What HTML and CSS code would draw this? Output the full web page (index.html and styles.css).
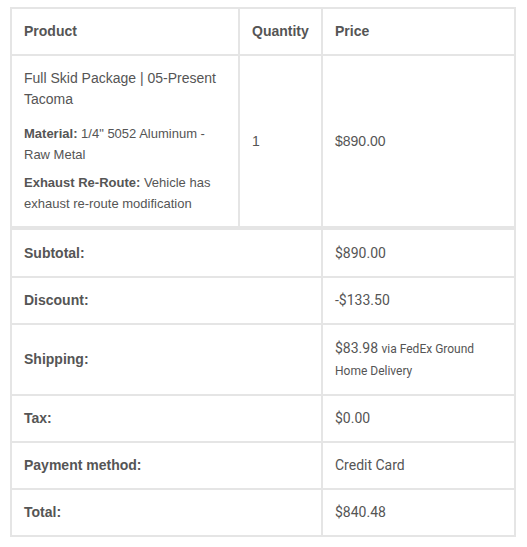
FILE: index.html
```html
<!DOCTYPE html>
<html lang="en">
<head>
    <meta charset="UTF-8">
    <meta name="viewport" content="width=device-width, initial-scale=1.0">
    <title>Order details</title>
    <link rel="stylesheet" href="styles.css">
</head>
<body>

    <div class="order-wrap">
        <table class="order-table">
            <colgroup>
                <col class="col-product">
                <col class="col-qty">
                <col class="col-price">
            </colgroup>
            <thead>
                <tr>
                    <th>Product</th>
                    <th>Quantity</th>
                    <th>Price</th>
                </tr>
            </thead>
            <tbody>
                <tr>
                    <td>
                        <div class="item-name">Full Skid Package | 05-Present Tacoma</div>
                        <ul class="item-meta">
                            <li><strong>Material:</strong> 1/4" 5052 Aluminum - Raw Metal</li>
                            <li><strong>Exhaust Re-Route:</strong> Vehicle has exhaust re-route modification</li>
                        </ul>
                    </td>
                    <td>1</td>
                    <td>$890.00</td>
                </tr>
            </tbody>
            <tfoot>
                <tr>
                    <th colspan="2">Subtotal:</th>
                    <td>$890.00</td>
                </tr>
                <tr>
                    <th colspan="2">Discount:</th>
                    <td>-$133.50</td>
                </tr>
                <tr class="shipping-row">
                    <th colspan="2">Shipping:</th>
                    <td>$83.98 <small>via FedEx Ground Home Delivery</small></td>
                </tr>
                <tr>
                    <th colspan="2">Tax:</th>
                    <td>$0.00</td>
                </tr>
                <tr>
                    <th colspan="2">Payment method:</th>
                    <td>Credit Card</td>
                </tr>
                <tr>
                    <th colspan="2">Total:</th>
                    <td>$840.48</td>
                </tr>
            </tfoot>
        </table>
    </div>

</body>
</html>
```

FILE: styles.css
```css
/* Page */
body {
    margin: 0;
    background: #fff;
    font-family: "Liberation Sans", Arial, sans-serif;
    font-size: 14px;
    color: #555;
}

.order-wrap {
    padding: 7px 13px 0 10px;
}

/* Table */
.order-table {
    width: 504px;
    table-layout: fixed;
    border-collapse: collapse;
    border: 2px solid #e5e5e5;
}

.col-product { width: 228px; }
.col-qty { width: 83px; }
.col-price { width: 193px; }

.order-table th,
.order-table td {
    border: 2px solid #e5e5e5;
    padding: 12px 12px;
    line-height: 21px;
    text-align: left;
    vertical-align: middle;
}

.order-table th {
    font-weight: bold;
}

/* Item row */
.item-name {
    margin-bottom: 13px;
}

.item-meta {
    list-style: none;
    margin: 0;
    padding: 0;
    font-size: 13px;
}

.item-meta li + li {
    margin-top: 7px;
}

.item-meta strong {
    font-weight: bold;
}

/* Totals */
.order-table tfoot tr:first-child th,
.order-table tfoot tr:first-child td {
    border-top: 4px solid #e5e5e5;
    padding-top: 13px;
}

.order-table tfoot td {
    font-family: Roboto, "Liberation Sans", sans-serif;
}

.order-table .shipping-row td {
    padding-top: 13px;
}

.order-table tfoot small {
    font-size: 12px;
}
```
